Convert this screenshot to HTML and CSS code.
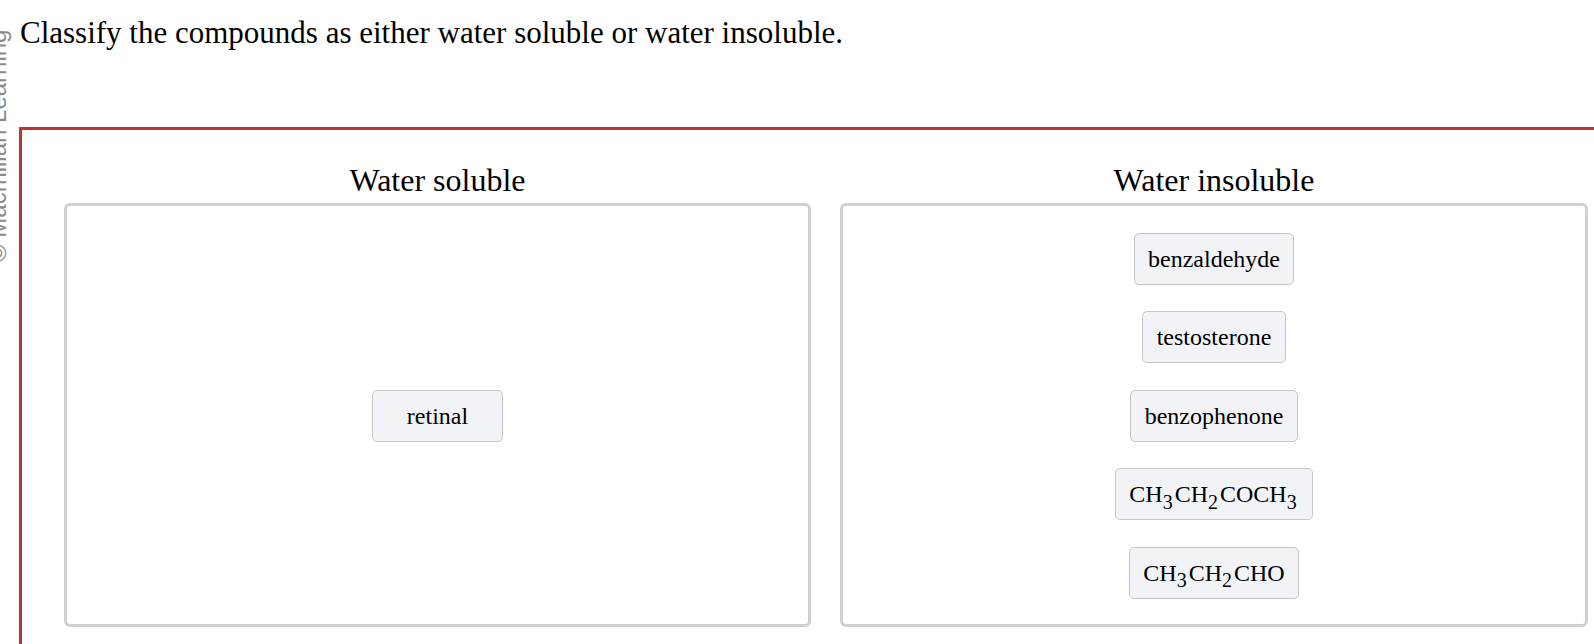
FILE: index.html
```html
<!DOCTYPE html>
<html>
<head>
<meta charset="utf-8">
<link rel="stylesheet" href="styles.css">
</head>
<body>
<div class="page">
  <div class="credit"><span class="credit-text">© Macmillan Learning</span></div>
  <div class="main">
    <h1 class="prompt">Classify the compounds as either water soluble or water insoluble.</h1>
    <div class="frame">
      <div class="columns">
        <div class="column">
          <div class="col-title">Water soluble</div>
          <div class="bin bin-center">
            <div class="chip">retinal</div>
          </div>
        </div>
        <div class="column">
          <div class="col-title">Water insoluble</div>
          <div class="bin">
            <div class="chip">benzaldehyde</div>
            <div class="chip">testosterone</div>
            <div class="chip">benzophenone</div>
            <div class="chip">CH<sub>3</sub>CH<sub>2</sub>COCH<sub>3</sub></div>
            <div class="chip">CH<sub>3</sub>CH<sub>2</sub>CHO</div>
          </div>
        </div>
      </div>
    </div>
  </div>
</div>
</body>
</html>
```

FILE: styles.css
```css
html, body {
  margin: 0;
  padding: 0;
  background: #ffffff;
  overflow: hidden;
}
.page {
  display: flex;
  font-family: "Liberation Serif", "Times New Roman", serif;
  color: #000;
  width: 1594px;
  height: 644px;
  overflow: hidden;
}
.credit {
  width: 19px;
  flex: none;
  overflow: visible;
}
.credit-text {
  display: block;
  width: max-content;
  font-family: "Liberation Sans", Arial, sans-serif;
  font-size: 24px;
  line-height: 24px;
  color: #8a8a8a;
  white-space: nowrap;
  transform-origin: 0 0;
  transform: translate(-14px, 262px) rotate(-90deg);
}
.main {
  flex: 1;
  min-width: 0;
  display: flex;
  flex-direction: column;
}
.prompt {
  font-weight: normal;
  font-size: 31px;
  line-height: 36px;
  margin: 15px 0 0 1px;
  white-space: nowrap;
}
.frame {
  flex: 1;
  margin-top: 76px;
  border: 3px solid #c13333;
  border-right: none;
  border-bottom: none;
  padding: 32px 0 0 42px;
}
.columns {
  display: grid;
  grid-template-columns: 747px 748px;
  column-gap: 29px;
}
.column {
  display: flex;
  flex-direction: column;
}
.col-title {
  text-align: center;
  font-size: 32px;
  line-height: 37px;
  margin-bottom: 4px;
}
.bin {
  flex: 1;
  border: 3px solid #d0d0d0;
  border-radius: 6px;
  display: flex;
  flex-direction: column;
  align-items: center;
  gap: 26.5px;
  padding: 26.7px 0 25.7px;
}
.bin-center {
  justify-content: center;
}
.chip {
  display: block;
  background: #f2f3f7;
  border: 1px solid #c6c6c6;
  border-radius: 5px;
  height: 52px;
  line-height: 50px;
  min-width: 131px;
  box-sizing: border-box;
  padding: 0 13.5px;
  text-align: center;
  font-size: 24px;
  white-space: nowrap;
}
.chip sub {
  font-size: 20px;
  vertical-align: -6.5px;
  line-height: 0;
  margin-right: 2px;
}
```
